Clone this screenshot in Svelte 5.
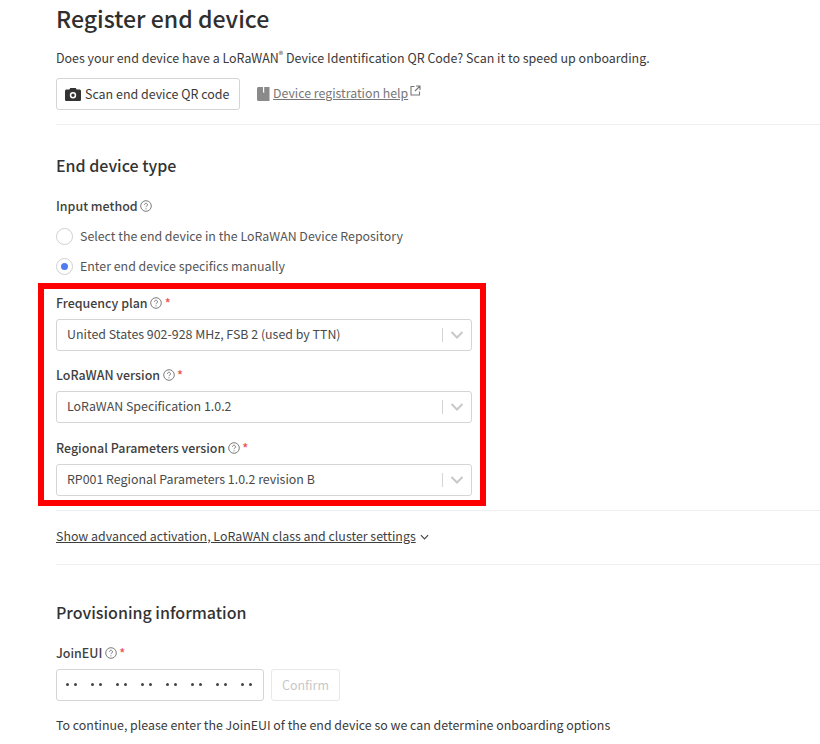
<script>
  const fields = [
    { label: "Frequency plan", value: "United States 902-928 MHz, FSB 2 (used by TTN)" },
    { label: "LoRaWAN version", value: "LoRaWAN Specification 1.0.2" },
    { label: "Regional Parameters version", value: "RP001 Regional Parameters 1.0.2 revision B" }
  ];
</script>

{#snippet help()}
  <svg class="help" viewBox="0 0 12 12" width="12" height="12" aria-hidden="true">
    <circle cx="6" cy="6" r="5.3" fill="none" stroke="#7d7d7d" stroke-width="1" />
    <path d="M4.500 4.700a1.500 1.500 0 1 1 2.300 1.300c-.6.4-.8.6-.8 1.200" fill="none" stroke="#7d7d7d" stroke-width="1" />
    <circle cx="6" cy="8.800" r=".6" fill="#7d7d7d" />
  </svg>
{/snippet}

<main class="page">
  <h1>Register end device</h1>
  <p class="intro">Does your end device have a LoRaWAN<sup>®</sup> Device Identification QR Code? Scan it to speed up onboarding.</p>
  <div class="actions">
    <button class="scan" type="button">
      <svg viewBox="0 0 16 14" width="16" height="14" aria-hidden="true">
        <path fill-rule="evenodd" fill="#333" d="M5.200 1 4.400 2.500H1.600C.7 2.500 0 3.200 0 4v8.400C0 13.300.7 14 1.600 14h12.800c.9 0 1.600-.7 1.600-1.600V4c0-.8-.7-1.500-1.600-1.500h-2.800L10.800 1zM8 5a3.200 3.200 0 1 1 0 6.400A3.200 3.200 0 0 1 8 5zm0 1.500a1.700 1.700 0 1 0 0 3.400 1.700 1.700 0 0 0 0-3.400z" />
      </svg>
      Scan end device QR code
    </button>
    <span class="doc">
      <svg viewBox="0 0 13 14" width="13" height="14" aria-hidden="true">
        <path fill="#8a8a8a" d="M1.500 0H12.500V14H1.500C.7 14 0 13.300 0 12.500V1.500C0 .7.700 0 1.500 0z" />
        <path fill="#fff" d="M6 0H7.200V6L6.600 5.300 6 6z" />
      </svg>
      <a href="#help">Device registration help</a>
      <svg class="ext" viewBox="0 0 11 11" width="11" height="11" aria-hidden="true">
        <path d="M4.500 1.500H1V10H9.500V6.500M6 1H10V5M10 1 5 6" fill="none" stroke="#777" stroke-width="1.100" />
      </svg>
    </span>
  </div>
  <hr class="first" />

  <h2 class="type-title">End device type</h2>
  <div class="label method">Input method {@render help()}</div>
  <div class="radio"><span class="dot"></span>Select the end device in the LoRaWAN Device Repository</div>
  <div class="radio"><span class="dot on"></span>Enter end device specifics manually</div>

  <section class="fields">
    <div class="highlight"></div>
    {#each fields as f}
      <div class="field">
        <div class="label">{f.label} {@render help()} <span class="req">*</span></div>
        <div class="select">
          <span class="value">{f.value}</span>
          <span class="sep"></span>
          <svg viewBox="0 0 14 8" width="14" height="8" aria-hidden="true">
            <path d="M1.500 1 7 6.500 12.500 1" fill="none" stroke="#c8c8c8" stroke-width="2" />
          </svg>
        </div>
      </div>
    {/each}
  </section>
  <hr class="second" />

  <div class="advanced">
    <a href="#advanced">Show advanced activation, LoRaWAN class and cluster settings</a>
    <svg viewBox="0 0 10 6" width="9" height="6" aria-hidden="true">
      <path d="M1 1 5 5 9 1" fill="none" stroke="#444" stroke-width="1.300" />
    </svg>
  </div>
  <hr class="third" />

  <h2 class="prov-title">Provisioning information</h2>
  <div class="label join">JoinEUI {@render help()} <span class="req">*</span></div>
  <div class="eui-row">
    <div class="eui">
      {#each Array(8) as _}<span class="pair"><i></i><i></i></span>{/each}
    </div>
    <button class="confirm" type="button" disabled>Confirm</button>
  </div>
  <p class="hint">To continue, please enter the JoinEUI of the end device so we can determine onboarding options</p>
</main>

<style>
  :global(body) {
    background: #fff;
    overflow: hidden;
  }

  .page {
    height: 744px;
    overflow: hidden;
    padding-left: 56px;
    font-family: "Noto Sans CJK SC", "Noto Sans", sans-serif;
    font-size: 12.45px;
    line-height: 20px;
    color: #3a3a3a;
  }

  h1 {
    margin: 0;
    padding-top: 1px;
    font-size: 23.1px;
    line-height: 34px;
    font-weight: 500;
    color: #2f2f2f;
  }

  .intro {
    margin: 13px 0 0;
    height: 20px;
  }

  sup {
    font-size: 9px;
    line-height: 0;
  }

  .actions {
    display: flex;
    align-items: center;
    gap: 17px;
    margin-top: 10px;
  }

  button {
    font: inherit;
  }

  .scan {
    display: flex;
    align-items: center;
    gap: 4px;
    height: 32px;
    width: 184px;
    padding: 0 0 0 8px;
    background: #fff;
    border: 1px solid #d5d5d5;
    border-radius: 3px;
    color: #3a3a3a;
    white-space: nowrap;
  }

  .scan svg {
    flex: none;
  }

  .doc {
    display: flex;
    align-items: center;
    margin-top: -1px;
    font-size: 12.35px;
    color: #777;
  }

  .doc a {
    margin-left: 3px;
    padding-bottom: 2px;
    color: #777;
  }

  .ext {
    margin: -6px 0 0 2px;
  }

  hr {
    border: 0;
    height: 1px;
    margin: 0;
    background: #efefef;
  }

  .first {
    margin-top: 14px;
  }

  h2 {
    margin: 0;
    font-size: 16px;
    line-height: 24px;
    font-weight: 500;
    color: #333;
  }

  .type-title {
    margin-top: 28px;
  }

  .label {
    display: flex;
    align-items: center;
    gap: 2.500px;
    font-weight: 500;
    height: 20px;
    color: #3f3f3f;
  }

  .method {
    margin-top: 19px;
  }

  .help {
    flex: none;
  }

  .req {
    color: #ee5555;
  }

  .radio {
    display: flex;
    align-items: center;
    gap: 7px;
    height: 20px;
    margin-top: 10px;
    font-size: 12.38px;
    color: #555;
  }

  .radio .dot {
    box-sizing: border-box;
    width: 17px;
    height: 17px;
    border: 1px solid #d0d0d0;
    border-radius: 50%;
    background: #fff;
    display: grid;
    place-items: center;
  }

  .dot.on::after {
    content: "";
    width: 7px;
    height: 7px;
    border-radius: 50%;
    background: #4f7df0;
  }

  .fields {
    position: relative;
    width: 416px;
    margin-top: 17px;
    display: flex;
    flex-direction: column;
    gap: 14.400px;
  }

  .highlight {
    position: absolute;
    left: -18px;
    top: -10px;
    width: 448px;
    height: 223px;
    box-sizing: border-box;
    border: 6px solid #f00;
    pointer-events: none;
  }

  .select {
    display: flex;
    align-items: center;
    box-sizing: border-box;
    height: 32px;
    margin-top: 6px;
    padding: 0 7px 2px 10px;
    border: 1px solid #d5d5d5;
    border-radius: 3px;
    background: #fff;
    font-size: 12.4px;
    color: #4a4a4a;
  }

  .select svg,
  .sep {
    margin-top: 2px;
  }

  .value {
    flex: 1;
  }

  .sep {
    width: 1px;
    height: 14px;
    background: #d5d5d5;
    margin-right: 7px;
  }

  .second {
    margin-top: 14px;
  }

  .advanced {
    display: flex;
    align-items: center;
    gap: 4px;
    height: 20px;
    margin-top: 15px;
    font-size: 12.4px;
  }

  .advanced svg {
    margin-top: 3px;
  }

  .advanced a {
    color: #3f3f3f;
  }

  .third {
    margin-top: 18px;
  }

  .prov-title {
    margin-top: 35px;
  }

  .join {
    margin-top: 19px;
  }

  .eui-row {
    display: flex;
    gap: 7px;
    margin-top: 6px;
  }

  .eui {
    display: flex;
    align-items: center;
    gap: 14px;
    box-sizing: border-box;
    width: 208px;
    height: 32px;
    padding-left: 9px;
    border: 1px solid #d5d5d5;
    border-radius: 3px;
  }

  .pair {
    display: flex;
    gap: 5px;
  }

  .pair i {
    width: 3px;
    height: 3px;
    border-radius: 50%;
    background: #444;
  }

  .confirm {
    width: 69px;
    height: 32px;
    padding: 0;
    background: #fff;
    border: 1px solid #e8e8e8;
    border-radius: 3px;
    color: #c8c8c8;
  }

  .hint {
    margin: 14px 0 0;
    font-size: 12.4px;
  }
</style>
